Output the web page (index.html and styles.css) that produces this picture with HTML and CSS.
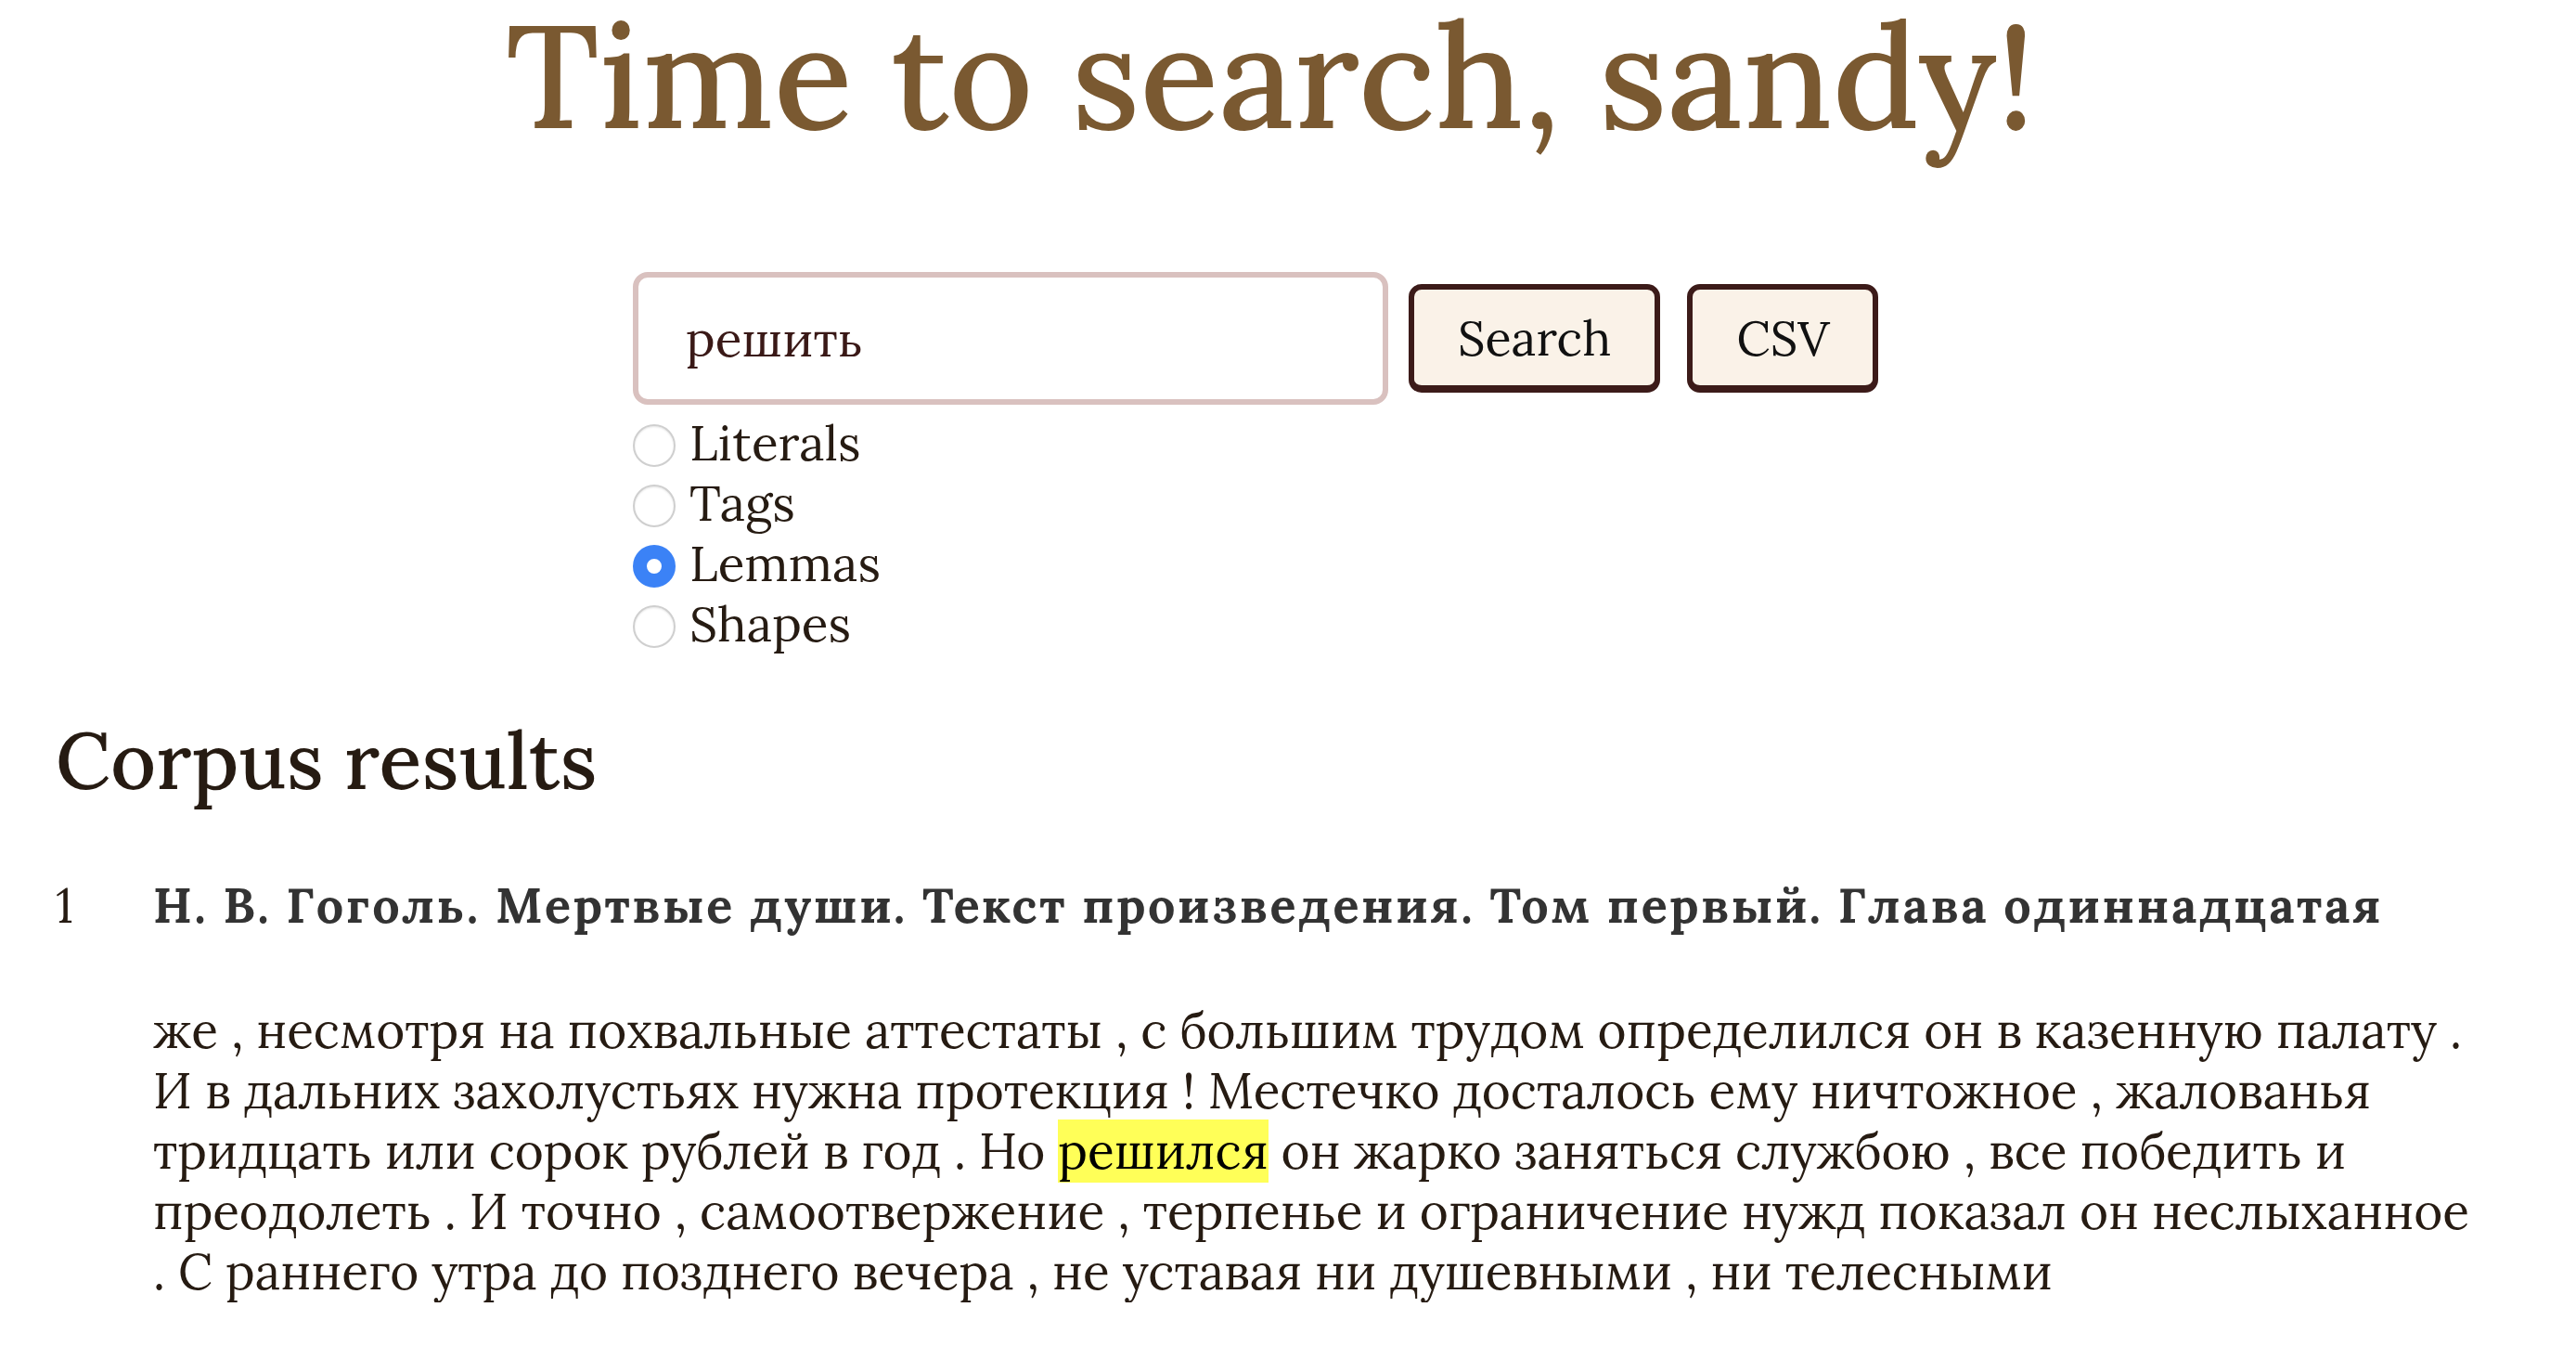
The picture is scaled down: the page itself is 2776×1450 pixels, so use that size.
FILE: index.html
```html
<!DOCTYPE html>
<html lang="ru">
<head>
<meta charset="utf-8">
<title>Corpus search</title>
<link rel="stylesheet" href="styles.css">
</head>
<body>
<main class="page">
  <header class="top">
    <h1 class="greeting">Time to search, sandy!</h1>
    <form class="search">
      <div class="search-row">
        <input class="query" type="text" value="решить">
        <button class="btn" type="button">Search</button>
        <button class="btn btn-csv" type="button">CSV</button>
      </div>
      <div class="modes">
        <label class="mode"><input type="radio" name="mode" class="radio"><span>Literals</span></label>
        <label class="mode"><input type="radio" name="mode" class="radio"><span>Tags</span></label>
        <label class="mode"><input type="radio" name="mode" class="radio" checked><span>Lemmas</span></label>
        <label class="mode"><input type="radio" name="mode" class="radio"><span>Shapes</span></label>
      </div>
    </form>
  </header>

  <section class="results">
    <h2 class="results-title">Corpus results</h2>
    <ol class="result-list">
      <li class="result">
        <span class="result-num">1</span>
        <div class="result-body">
          <div class="result-source">Н. В. Гоголь. Мертвые души. Текст произведения. Том первый. Глава одиннадцатая</div>
          <p class="result-text">же , несмотря на похвальные аттестаты , с большим трудом определился он в казенную палату . И в дальних захолустьях нужна протекция ! Местечко досталось ему ничтожное , жалованья тридцать или сорок рублей в год . Но <mark class="hit">решился</mark> он жарко заняться службою , все победить и преодолеть . И точно , самоотвержение , терпенье и ограничение нужд показал он неслыханное . С раннего утра до позднего вечера , не уставая ни душевными , ни телесными</p>
        </div>
      </li>
    </ol>
  </section>
</main>
</body>
</html>
```
FILE: styles.css
```css
* { box-sizing: border-box; }

html, body {
  margin: 0;
  padding: 0;
  background: #ffffff;
}

body {
  font-family: "Lora", "Noto Serif", "DejaVu Serif", serif;
  color: #261b12;
}

.page {
  padding: 0 101px 0 60px;
}

.top {
  display: flex;
  flex-direction: column;
  align-items: center;
  margin-left: -60px;
  margin-right: -29px;
}

.greeting {
  margin: 2px 0 0 34px;
  font-size: 157px;
  line-height: 158px;
  font-weight: 500;
  color: #7a5931;
  white-space: nowrap;
}

.search {
  margin-top: 133px;
  width: 1340px;
}

.search-row {
  display: flex;
  align-items: center;
}

.query {
  flex: none;
  width: 814px;
  height: 143px;
  border: 6px solid #d9c1bf;
  border-radius: 16px;
  padding: 0 0 0 51px;
  font-family: inherit;
  font-size: 53px;
  color: #3a1917;
  background: #ffffff;
  outline: none;
}

.btn {
  flex: none;
  height: 117px;
  margin-left: 22px;
  padding: 0 47px;
  border: 6px solid #3c1b19;
  border-bottom-width: 8px;
  border-radius: 14px;
  background: #faf2e8;
  font-family: inherit;
  font-size: 52px;
  color: #111111;
  cursor: pointer;
}

.btn-csv {
  margin-left: 29px;
}

.modes {
  margin-top: 9px;
  display: flex;
  flex-direction: column;
}

.mode {
  display: flex;
  align-items: center;
  height: 65px;
  font-size: 53px;
  line-height: 65px;
  color: #261b12;
}

.radio {
  appearance: none;
  -webkit-appearance: none;
  width: 46px;
  height: 46px;
  margin: 4px 15px 0 0;
  border: 2px solid #cfcfcf;
  border-radius: 50%;
  background: #ffffff;
  box-shadow: inset 0 1px 2px rgba(0, 0, 0, 0.1);
  flex: none;
}

.radio:checked {
  border: 15px solid #3b82f6;
  box-shadow: none;
}

.results-title {
  margin: 63px 0 0;
  font-size: 85px;
  line-height: 1.2;
  font-weight: 500;
  color: #261b12;
}

.result-list {
  list-style: none;
  margin: 73px 0 0;
  padding: 0;
}

.result {
  display: grid;
  grid-template-columns: 105px 1fr;
}

.result-num {
  font-size: 52px;
  line-height: 65px;
  color: #261b12;
}

.result-source {
  font-size: 52px;
  line-height: 65px;
  font-weight: 700;
  letter-spacing: 2.6px;
  color: #333333;
}

.result-text {
  margin: 70px 0 0;
  font-size: 53.1px;
  line-height: 65px;
  color: #261b12;
}

.hit {
  background: #ffff58;
  color: #000000;
}
```
